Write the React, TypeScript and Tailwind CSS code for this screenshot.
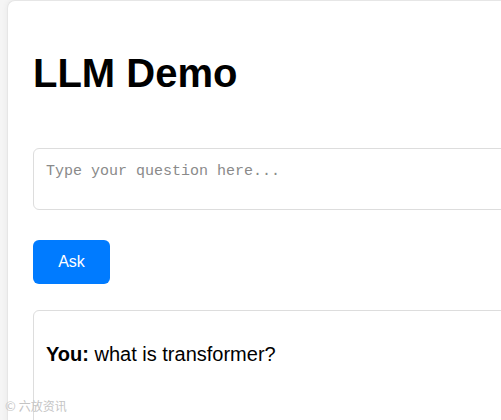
export default function App() {
  return (
    <div className="relative h-[420px] w-full overflow-hidden bg-[#f5f5f5] pl-[7px] font-['Liberation_Sans',Arial,sans-serif]">
      <div className="h-[440px] w-[620px] rounded-tl-[8px] border-l border-t border-[#e6e6e6] bg-white px-[25px] pt-[49px] shadow-[0_0_6px_rgba(0,0,0,0.06)]">
        <h1 className="text-[40px] font-bold leading-[46px] text-black">LLM Demo</h1>

        <textarea
          className="mt-[52px] block h-[62px] w-full resize-none rounded-[6px] border border-[#dddddd] px-[12px] pt-[14px] pb-[10px] font-['Liberation_Mono','Courier_New',monospace] text-[15px] leading-[17px] text-[#333] outline-none placeholder:text-[#8a8a8a]"
          placeholder="Type your question here..."
        />

        <button className="mt-[30px] flex h-[44px] w-[77px] items-center justify-center rounded-[6px] bg-[#007bff] text-[16px] text-white">
          Ask
        </button>

        <div className="mt-[26px] h-[200px] rounded-[6px] border border-[#dddddd] px-[12px] pt-[32px]">
          <p className="text-[20px] leading-[23px] text-black">
            <span className="font-bold">You:</span> what is transformer?
          </p>
        </div>
      </div>

      <div className="absolute bottom-[7px] left-[5px] flex items-center gap-[3px] font-['Noto_Sans_CJK_SC',sans-serif] text-[12px] leading-[14px] text-[#c4c4c4]">
        <span className="text-[13px]">©</span>
        <span>六放资讯</span>
      </div>
    </div>
  )
}
